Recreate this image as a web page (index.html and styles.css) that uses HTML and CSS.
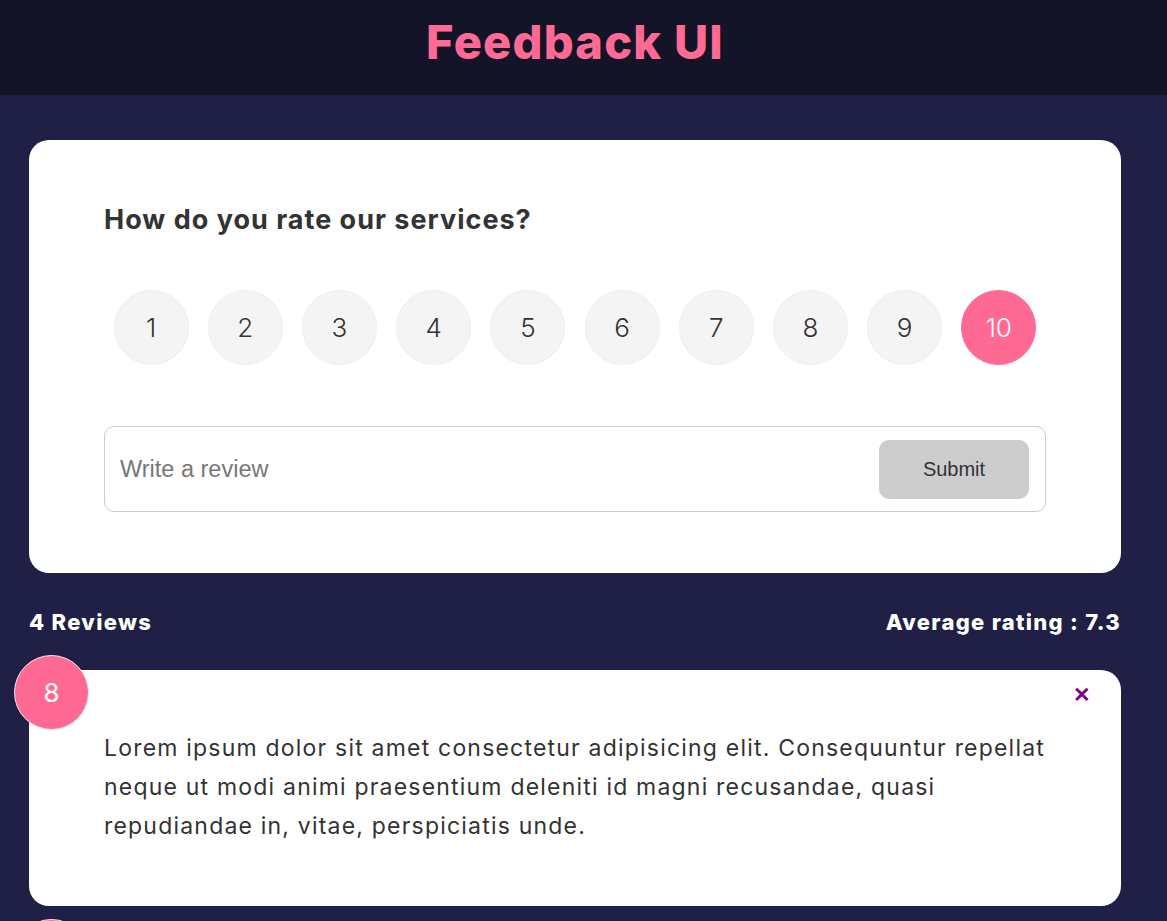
FILE: index.html
```html
<!DOCTYPE html>
<html lang="en">
<head>
<meta charset="utf-8">
<title>Feedback UI</title>
<link rel="stylesheet" href="styles.css">
</head>
<body>
<header class="header">
  <div class="header-inner"><h1 class="title">Feedback UI</h1></div>
</header>
<main class="container">
  <section class="card rate-card">
    <h2 class="rate-question">How do you rate our services?</h2>
    <ul class="ratings">
      <li class="rating">1</li>
      <li class="rating">2</li>
      <li class="rating">3</li>
      <li class="rating">4</li>
      <li class="rating">5</li>
      <li class="rating">6</li>
      <li class="rating">7</li>
      <li class="rating">8</li>
      <li class="rating">9</li>
      <li class="rating selected">10</li>
    </ul>
    <form class="review-form">
      <input class="review-input" type="text" placeholder="Write a review">
      <button class="submit-btn" type="button">Submit</button>
    </form>
  </section>
  <div class="stats">
    <h4 class="stat">4 Reviews</h4>
    <h4 class="stat">Average rating : 7.3</h4>
  </div>
  <div class="review-list">
    <article class="card review">
      <div class="badge">8</div>
      <button class="close" type="button">✕</button>
      <p class="review-text">Lorem ipsum dolor sit amet consectetur adipisicing elit. Consequuntur repellat neque ut modi animi praesentium deleniti id magni recusandae, quasi repudiandae in, vitae, perspiciatis unde.</p>
    </article>
    <article class="card review">
      <div class="badge">7</div>
      <button class="close" type="button">✕</button>
      <p class="review-text">Lorem ipsum dolor sit amet consectetur adipisicing elit. Consequuntur repellat neque ut modi animi praesentium deleniti id magni recusandae, quasi repudiandae in, vitae, perspiciatis unde.</p>
    </article>
  </div>
</main>
</body>
</html>
```

FILE: styles.css
```css
* { box-sizing: border-box; }
html, body { margin: 0; padding: 0; }
body {
  background: #202046;
  font-family: "Inter", "Noto Sans", sans-serif;
  color: #333;
  min-height: 100vh;
}
.header {
  background: #141429;
  height: 95px;
}
.header-inner {
  width: 1150px;
  height: 100%;
  display: flex;
  align-items: center;
  justify-content: center;
}
.title {
  margin: 0 0 12px;
  color: #ff6a95;
  font-size: 47px;
  font-weight: 800;
  letter-spacing: 1.2px;
}
.container {
  width: 1092px;
  margin: 45px 0 0 29px;
}
.card {
  background: #fff;
  border-radius: 20px;
}
.rate-card {
  padding: 62px 75px 61px;
}
.rate-question {
  margin: 0;
  font-size: 27px;
  font-weight: 700;
  color: #333;
  line-height: 1.3;
  letter-spacing: 1px;
}
.ratings {
  list-style: none;
  margin: 53px 0 0;
  padding: 0;
  display: flex;
  justify-content: space-around;
}
.rating {
  width: 75px;
  height: 75px;
  border-radius: 50%;
  background: #f4f4f4;
  border: 1px solid #eee;
  display: flex;
  align-items: center;
  justify-content: center;
  font-size: 26px;
  font-weight: 300;
  color: #333;
}
.rating.selected {
  background: #ff6a95;
  border-color: #ff6a95;
  color: #fff;
}
.review-form {
  margin-top: 61px;
  height: 86px;
  border: 1px solid #ccc;
  border-radius: 10px;
  display: flex;
  align-items: center;
  padding: 0 16px 0 15px;
}
.review-input {
  flex: 1;
  border: none;
  outline: none;
  font-family: "Liberation Sans", Arial, sans-serif;
  font-size: 23.5px;
  color: #333;
  padding: 0;
  background: transparent;
}
.review-input::placeholder { color: #777; }
.submit-btn {
  width: 150px;
  height: 59px;
  border: none;
  border-radius: 10px;
  background: #ccc;
  color: #333;
  font-family: "Liberation Sans", Arial, sans-serif;
  font-size: 20px;
}
.stats {
  display: flex;
  justify-content: space-between;
  align-items: center;
  height: 97px;
}
.stat {
  margin: 0;
  color: #fff;
  font-size: 22px;
  font-weight: 800;
  letter-spacing: 1.3px;
}
.review-list {
  display: flex;
  flex-direction: column;
  gap: 28px;
}
.review {
  position: relative;
  padding: 59px 75px 60px;
}
.badge {
  position: absolute;
  top: -15px;
  left: -15px;
  width: 75px;
  height: 75px;
  border-radius: 50%;
  background: #ff6a95;
  border: 1px solid #eee;
  color: #fff;
  display: flex;
  align-items: center;
  justify-content: center;
  font-size: 26px;
  font-weight: 400;
}
.close {
  position: absolute;
  top: 13px;
  right: 30px;
  border: none;
  background: none;
  color: #800080;
  font-size: 21px;
  font-weight: 900;
  cursor: pointer;
  padding: 0;
}
.review-text {
  margin: 0;
  font-size: 23px;
  line-height: 39px;
  color: #333;
  letter-spacing: 1.2px;
}
```
